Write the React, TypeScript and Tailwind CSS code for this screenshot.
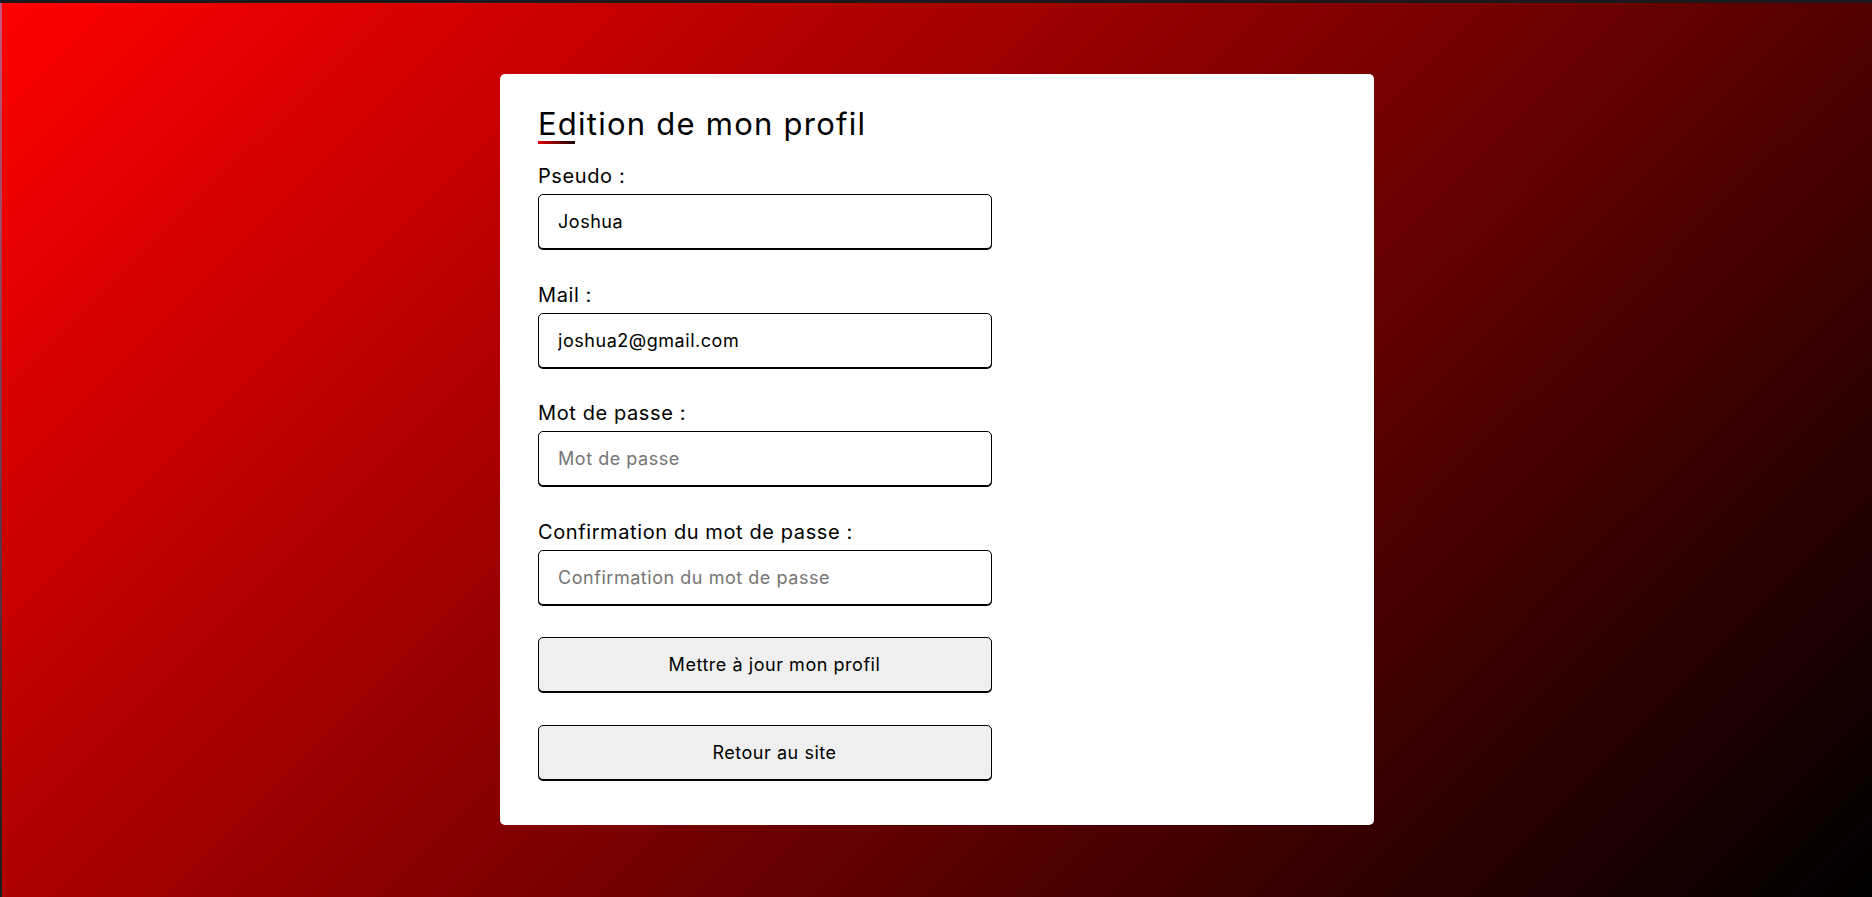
import React from "react";

const font = { fontFamily: "Inter, 'Noto Sans', sans-serif" };

function Field({ label, value, placeholder, type = "text" }: { label: string; value?: string; placeholder?: string; type?: string }) {
  return (
    <div className="flex flex-col">
      <label className="text-[20px] leading-[24px] text-black tracking-[0.03em]">{label}</label>
      <input
        type={type}
        defaultValue={value}
        placeholder={placeholder}
        className="mt-[6px] w-[454px] h-[55px] rounded-[5px] border border-black shadow-[0_1px_0_#000] bg-white pl-[19px] text-[18px] tracking-[0.03em] text-black placeholder:text-[#757575] outline-none"
        style={font}
      />
    </div>
  );
}

export default function App() {
  return (
    <div className="h-[897px] w-full flex flex-col overflow-hidden" style={font}>
      <div className="h-[3px] bg-[#1c181b] shrink-0" />
      <div className="flex flex-1">
        <div className="w-[2px] bg-[linear-gradient(180deg,#c8587a,#1a1a1a)]" />
        <main className="flex-1 bg-[linear-gradient(135deg,#ff0000,#000000)] flex items-start justify-center pt-[71px]">
          <div className="w-[874px] h-[751px] rounded-[5px] bg-white pl-[38px] pt-[31px] flex flex-col">
            <h1 className="pt-[1px] text-[31px] leading-[35px] text-black tracking-[0.04em] font-normal">Edition de mon profil</h1>
            <div className="w-[37px] h-[3px] bg-[linear-gradient(90deg,#e00000,#1a0000)]" />
            <div className="mt-[20px] flex flex-col gap-[33.7px]">
              <Field label="Pseudo :" value="Joshua" />
              <Field label="Mail :" value="joshua2@gmail.com" />
              <Field label="Mot de passe :" placeholder="Mot de passe" type="password" />
              <Field label="Confirmation du mot de passe :" placeholder="Confirmation du mot de passe" type="password" />
            </div>
            <button className="mt-[32px] w-[454px] h-[55px] rounded-[5px] border border-black shadow-[0_1px_0_#000] bg-[#efefef] pl-[19px] text-[18px] tracking-[0.03em] text-black text-center">
              Mettre à jour mon profil
            </button>
            <button className="mt-[33px] w-[454px] h-[55px] rounded-[5px] border border-black shadow-[0_1px_0_#000] bg-[#efefef] pl-[19px] text-[18px] tracking-[0.03em] text-black text-center">
              Retour au site
            </button>
          </div>
        </main>
      </div>
    </div>
  );
}
